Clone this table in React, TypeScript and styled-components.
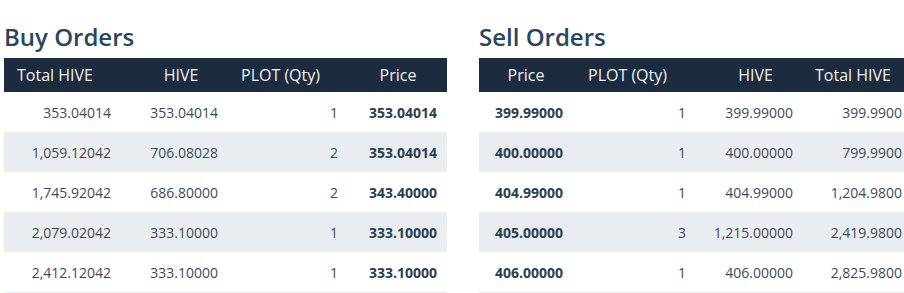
import React from "react";
import styled, {createGlobalStyle} from "styled-components";

const GlobalStyle = createGlobalStyle`
  html, body {
    margin: 0;
    padding: 0;
    overflow: hidden;
    background: #fff;
    font-family: "Open Sans", "Noto Sans", sans-serif;
  }
`;

type Align = 'left' | 'center' | 'right';

interface Column {
    width: number;
    title: string;
    headAlign: Align;
    headPadL: number;
    headPadR: number;
    dataAlign: Align;
    dataPadL: number;
    dataPadR: number;
    key: 'total' | 'hive' | 'qty' | 'price';
}

interface Order {
    price: string;
    qty: string;
    hive: string;
    total: string;
}

const Page = styled.div`
  display: flex;
  gap: 32px;
  padding-left: 4px;
  width: 930px;
`;

const Section = styled.section`
  width: 443px;
  flex-shrink: 0;
`;

const Title = styled.h2`
  margin: 19px 0 3px;
  font-size: 24px;
  line-height: 36px;
  font-weight: 600;
  color: #2a4560;
`;

const Table = styled.div`
  border-bottom: 1px solid #e8ebee;
`;

const Row = styled.div<{ $cols: string; $striped?: boolean }>`
  display: grid;
  grid-template-columns: ${p => p.$cols};
  height: 40px;
  align-items: center;
  background: ${p => (p.$striped ? '#e9edf0' : '#fff')};
`;

const HeadRow = styled(Row)`
  height: 34px;
  background: #1c2b3d;
`;

const HeadCell = styled.div<{ $align: Align; $pl: number; $pr: number }>`
  text-align: ${p => p.$align};
  padding: 0 ${p => p.$pr}px 0 ${p => p.$pl}px;
  font-size: 16px;
  color: #f1f3f5;
  white-space: nowrap;
`;

const Cell = styled.div<{ $align: Align; $pl: number; $pr: number; $bold?: boolean }>`
  text-align: ${p => p.$align};
  padding: 0 ${p => p.$pr}px 0 ${p => p.$pl}px;
  font-size: 14px;
  font-weight: ${p => (p.$bold ? 700 : 400)};
  color: ${p => (p.$bold ? '#2c3e50' : '#3d4b59')};
  white-space: nowrap;
`;

const buyColumns: Column[] = [
    {width: 120, title: 'Total HIVE', headAlign: 'left', headPadL: 13, headPadR: 0, dataAlign: 'right', dataPadL: 0, dataPadR: 13, key: 'total'},
    {width: 107, title: 'HIVE', headAlign: 'center', headPadL: 7, headPadR: 0, dataAlign: 'right', dataPadL: 0, dataPadR: 13, key: 'hive'},
    {width: 121, title: 'PLOT (Qty)', headAlign: 'left', headPadL: 10, headPadR: 0, dataAlign: 'right', dataPadL: 0, dataPadR: 14, key: 'qty'},
    {width: 95, title: 'Price', headAlign: 'center', headPadL: 0, headPadR: 3, dataAlign: 'right', dataPadL: 0, dataPadR: 10, key: 'price'},
];

const sellColumns: Column[] = [
    {width: 96, title: 'Price', headAlign: 'center', headPadL: 0, headPadR: 2, dataAlign: 'left', dataPadL: 16, dataPadR: 0, key: 'price'},
    {width: 124, title: 'PLOT (Qty)', headAlign: 'left', headPadL: 13, headPadR: 0, dataAlign: 'right', dataPadL: 0, dataPadR: 13, key: 'qty'},
    {width: 107, title: 'HIVE', headAlign: 'center', headPadL: 6, headPadR: 0, dataAlign: 'right', dataPadL: 0, dataPadR: 13, key: 'hive'},
    {width: 116, title: 'Total HIVE', headAlign: 'left', headPadL: 9, headPadR: 0, dataAlign: 'right', dataPadL: 0, dataPadR: 20, key: 'total'},
];

const buyOrders: Order[] = [
    {total: '353.04014', hive: '353.04014', qty: '1', price: '353.04014'},
    {total: '1,059.12042', hive: '706.08028', qty: '2', price: '353.04014'},
    {total: '1,745.92042', hive: '686.80000', qty: '2', price: '343.40000'},
    {total: '2,079.02042', hive: '333.10000', qty: '1', price: '333.10000'},
    {total: '2,412.12042', hive: '333.10000', qty: '1', price: '333.10000'},
];

const sellOrders: Order[] = [
    {price: '399.99000', qty: '1', hive: '399.99000', total: '399.9900'},
    {price: '400.00000', qty: '1', hive: '400.00000', total: '799.9900'},
    {price: '404.99000', qty: '1', hive: '404.99000', total: '1,204.9800'},
    {price: '405.00000', qty: '3', hive: '1,215.00000', total: '2,419.9800'},
    {price: '406.00000', qty: '1', hive: '406.00000', total: '2,825.9800'},
];

function OrderTable({title, columns, orders}: { title: string; columns: Column[]; orders: Order[] }) {
    const cols = columns.map(c => `${c.width}px`).join(' ');
    return (
        <Section>
            <Title>{title}</Title>
            <Table>
                <HeadRow $cols={cols}>
                    {columns.map(c =>
                        <HeadCell key={c.key} $align={c.headAlign} $pl={c.headPadL} $pr={c.headPadR}>
                            {c.title}
                        </HeadCell>
                    )}
                </HeadRow>
                {orders.map((o, i) =>
                    <Row key={i} $cols={cols} $striped={i % 2 === 1}>
                        {columns.map(c =>
                            <Cell key={c.key} $align={c.dataAlign} $pl={c.dataPadL} $pr={c.dataPadR}
                                  $bold={c.key === 'price'}>
                                {o[c.key]}
                            </Cell>
                        )}
                    </Row>
                )}
            </Table>
        </Section>
    );
}

export default function App() {
    return (
        <>
            <GlobalStyle/>
            <Page>
                <OrderTable title="Buy Orders" columns={buyColumns} orders={buyOrders}/>
                <OrderTable title="Sell Orders" columns={sellColumns} orders={sellOrders}/>
            </Page>
        </>
    );
}
